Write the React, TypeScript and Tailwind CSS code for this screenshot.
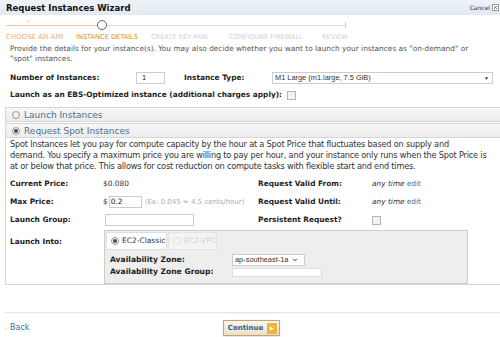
import { ChevronDown, Check, X } from "lucide-react";

const font = { fontFamily: '"DejaVu Sans", Verdana, sans-serif' };
const arial = { fontFamily: '"Liberation Sans", Arial, sans-serif' };

function Radio({ on, dim }: { on?: boolean; dim?: boolean }) {
  return (
    <span
      className={`inline-flex h-[8px] w-[8px] shrink-0 items-center justify-center rounded-full border ${
        dim ? "border-[#ddd] bg-[#f6f6f6]" : "border-[#999] bg-[#f4f4f4]"
      }`}
    >
      {on && <span className="h-[4px] w-[4px] rounded-full bg-[#3d4d5d]" />}
    </span>
  );
}

function Box() {
  return <span className="inline-block h-[9px] w-[9px] border border-[#b5b5b5] bg-[#f3f3f3]" />;
}

function Field({ label, children, w = "w-[93px]" }: { label: string; children: React.ReactNode; w?: string }) {
  return (
    <div className="flex h-[12px] items-center">
      <span className={`${w} shrink-0 font-bold text-[#222]`}>{label}</span>
      {children}
    </div>
  );
}

const steps = [
  { t: "Choose an AMI", w: "w-[70px]", c: "text-[7px] text-[#f0b070]" },
  { t: "Instance Details", w: "w-[75px]", c: "text-[6.6px] text-[#e08a26]" },
  { t: "Create Key Pair", w: "w-[78px]", c: "text-[6.6px] text-[#cfcfcf]" },
  { t: "Configure Firewall", w: "w-[93px]", c: "text-[6.6px] text-[#cfcfcf]" },
  { t: "Review", w: "w-[30px]", c: "text-[6.6px] text-[#cfcfcf]" },
];

const spotLines = [
  "Spot Instances let you pay for compute capacity by the hour at a Spot Price that fluctuates based on supply and",
  "demand. You specify a maximum price you are willing to pay per hour, and your instance only runs when the Spot Price is",
  "at or below that price. This allows for cost reduction on compute tasks with flexible start and end times.",
];

export default function App() {
  return (
    <div className="h-[337px] w-[500px] overflow-hidden bg-white text-[7.4px] leading-[10px] text-[#333]" style={font}>
      <div className="flex h-[15px] items-center justify-between bg-gradient-to-b from-[#eef3f8] to-[#e2e9f1] pl-[6px] pr-[1px]">
        <span className="text-[8.5px] font-bold text-[#111]">Request Instances Wizard</span>
        <span className="flex items-center gap-[2px] text-[6px] text-[#333]">
          Cancel
          <span className="flex h-[7px] w-[7px] items-center justify-center border border-[#999] bg-white">
            <X className="h-[5px] w-[5px]" strokeWidth={3} />
          </span>
        </span>
      </div>

      <div className="ml-[6px] mt-[4px] w-[340px]">
        <div className="relative h-[12px]">
          <div className="absolute left-0 top-[6px] h-px w-[96px] bg-[#f0c890]" />
          <div className="absolute left-[96px] top-[6px] h-px w-[244px] bg-[#ddd]" />
          <div className="absolute left-[339px] top-[3px] h-[6px] w-px bg-[#ccc]" />
          <Check className="absolute left-[20px] top-0 h-[5px] w-[5px] text-[#e8a050]" strokeWidth={3} />
          <div className="absolute left-[91px] top-[1px] h-[10px] w-[10px] rounded-full border border-[#666] bg-white" />
        </div>
        <div className="mt-[2px] flex items-center uppercase leading-[8px]">
          {steps.map((s) => (
            <span key={s.t} className={`${s.w} shrink-0 whitespace-nowrap ${s.c}`}>
              {s.t}
            </span>
          ))}
        </div>
      </div>

      <p className="mt-[3px] px-[10px] text-[#555]">
        Provide the details for your instance(s). You may also decide whether you want to launch your instances as "on-demand" or "spot" instances.
      </p>

      <div className="mt-[8px] flex items-center pl-[10px]">
        <span className="w-[126px] font-bold text-[#222]">Number of Instances:</span>
        <span className="flex h-[12px] w-[29px] items-center border border-[#ccc] pl-[5px] text-[#222]" style={arial}>
          1
        </span>
        <span className="ml-[19px] w-[88px] font-bold text-[#222]">Instance Type:</span>
        <span
          className="flex h-[12px] w-[221px] items-center justify-between border border-[#ccc] pl-[2px] pr-[3px] text-[#333]"
          style={arial}
        >
          M1 Large (m1.large, 7.5 GiB)
          <span className="text-[5px]">▼</span>
        </span>
      </div>

      <div className="mt-[6px] flex items-center gap-[5px] pl-[10px]">
        <span className="font-bold text-[#222]">Launch as an EBS-Optimized instance (additional charges apply):</span>
        <Box />
      </div>

      <div className="ml-[5px] mr-[-4px] mt-[7px]">
        <div className="flex h-[15px] items-center gap-[4px] border border-[#d6d6d6] bg-gradient-to-b from-[#f7f7f7] to-[#ececec] pl-[6px] text-[9px] text-[#4a6f94]">
          <Radio /> Launch Instances
        </div>
        <div className="mt-px flex h-[15px] items-center gap-[4px] border border-[#d6d6d6] bg-gradient-to-b from-[#f7f7f7] to-[#ececec] pl-[6px] text-[9px] text-[#4a6f94]">
          <Radio on /> Request Spot Instances
        </div>
        <div className="h-[147px] border border-t-0 border-[#d6d6d6] pl-[4px] pt-[1px]">
          <p className="text-[8.2px] leading-[11px] tracking-[-0.2px] text-[#333]">
            {spotLines.map((l) => (
              <span key={l} className="block whitespace-nowrap">
                {l}
              </span>
            ))}
          </p>

          <div className="mt-[6px] flex flex-col gap-[6px]">
            <div className="flex items-center">
              <div className="w-[248px]">
                <Field label="Current Price:">
                  <span className="text-[#333]">$0.080</span>
                </Field>
              </div>
              <Field label="Request Valid From:" w="w-[114px]">
                <span className="italic text-[#333]">any time</span>
                <span className="ml-[2px] text-[#3b6ea5]">edit</span>
              </Field>
            </div>
            <div className="flex items-center">
              <div className="w-[248px]">
                <Field label="Max Price:">
                  <span className="text-[#333]">$</span>
                  <span className="ml-[1px] flex h-[12px] w-[33px] items-center border border-[#ccc] pl-[1px] text-[#222]">0.2</span>
                  <span className="ml-[3px] whitespace-nowrap text-[7px] text-[#aaa]">(Ex: 0.045 = 4.5 cents/hour)</span>
                </Field>
              </div>
              <Field label="Request Valid Until:" w="w-[114px]">
                <span className="italic text-[#333]">any time</span>
                <span className="ml-[2px] text-[#3b6ea5]">edit</span>
              </Field>
            </div>
            <div className="flex items-center">
              <div className="w-[248px]">
                <Field label="Launch Group:">
                  <span className="ml-[2px] h-[12px] w-[89px] border border-[#ccc]" />
                </Field>
              </div>
              <Field label="Persistent Request?" w="w-[114px]">
                <Box />
              </Field>
            </div>
            <div className="-mt-[2px] flex items-start">
              <span className="mt-[7px] w-[94px] shrink-0 font-bold text-[#222]">Launch Into:</span>
              <div className="h-[54px] w-[364px] border border-[#ccc] bg-[#eeeeee] p-px">
                <div className="flex h-[18px]">
                  <span className="flex w-[61px] items-center gap-[3px] whitespace-nowrap border border-[#ddd] bg-white pl-[4px] text-[7.5px] text-[#333]">
                    <Radio on /> EC2-Classic
                  </span>
                  <span className="ml-px flex w-[49px] items-center gap-[3px] whitespace-nowrap border border-[#e4e4e4] bg-[#f4f4f4] pl-[4px] text-[7.5px] text-[#d0d0d0]">
                    <Radio dim /> EC2-VPC
                  </span>
                </div>
                <div className="mt-[4px] flex items-center pl-[4px]">
                  <span className="w-[122px] text-[7.6px] font-bold text-[#222]">Availability Zone:</span>
                  <span
                    className="flex h-[12px] w-[73px] items-center gap-[4px] border border-[#ccc] bg-white pl-[2px] text-[#333]"
                    style={arial}
                  >
                    ap-southeast-1a <ChevronDown className="h-[6px] w-[6px]" strokeWidth={4} />
                  </span>
                </div>
                <div className="mt-px flex items-center pl-[4px]">
                  <span className="w-[122px] text-[7.6px] font-bold text-[#222]">Availability Zone Group:</span>
                  <span className="h-[9px] w-[90px] border border-[#ddd] bg-white" />
                </div>
              </div>
            </div>
          </div>
        </div>
      </div>

      <div className="ml-[5px] mt-[27px] h-[2px] border-t border-[#e6e6e6] bg-[#f6f6f6]" />

      <div className="relative mt-[5px] flex h-[18px] items-center pl-[5px]">
        <span className="flex items-center gap-[3px] text-[8px] text-[#3b6ea5]">
          <span className="text-[5px] text-[#e39a3b]">‹</span>Back
        </span>
        <span className="absolute left-[223px] top-[1px] flex h-[16px] w-[57px] items-center border border-[#c9a36a] bg-gradient-to-b from-[#fbf6ee] to-[#eadfcd] shadow-sm">
          <span className="flex-1 text-center text-[7px] font-bold text-[#2c5a8a]">Continue</span>
          <span className="mr-[2px] flex h-[11px] w-[10px] items-center justify-center bg-[#f3b43e] text-[5px] text-white">▶</span>
        </span>
      </div>
    </div>
  );
}
